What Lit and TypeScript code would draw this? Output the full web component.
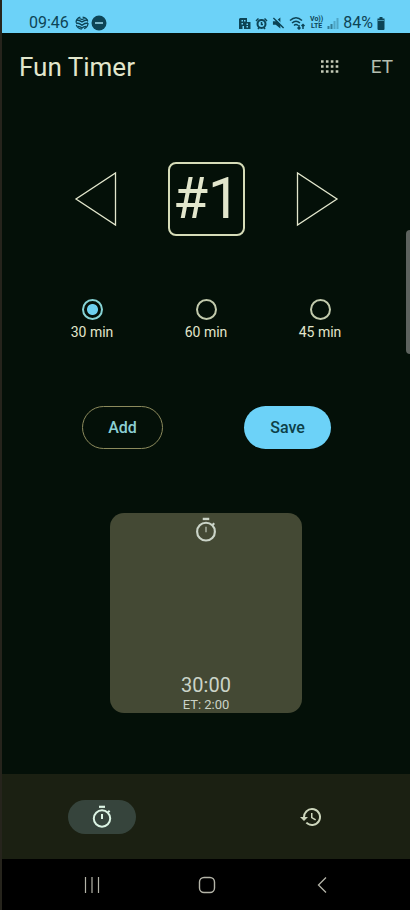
import { LitElement, html, css, svg } from "lit";
import { customElement, state } from "lit/decorators.js";

const stopwatch = (hand: number) => svg`
  <path d="M9 1.8h6" stroke-width="2.2"/>
  <circle cx="12" cy="13.500" r="8.200" stroke-width="2"/>
  <path d="M12 9v5" stroke-width=${hand}/>
  <path d="M18 7.400l1.600-1.600" stroke-width="2"/>`;

@customElement("app-root")
export class AppRoot extends LitElement {
  @state() minutes = 30;
  @state() current = 1;

  static styles = css`
    :host {
      display: flex;
      flex-direction: column;
      box-sizing: border-box;
      min-height: 100vh;
      position: relative;
      border-left: 2px solid #26241c;
      background: #041008;
      color: #e2e6cc;
      font-family: Roboto, sans-serif;
      overflow: hidden;
    }
    * { box-sizing: border-box; }
    svg { display: block; fill: none; stroke: currentColor; }
    button {
      display: block;
      margin: 0;
      padding: 0;
      border: 0;
      background: none;
      color: inherit;
      font: inherit;
    }
    .status {
      display: flex;
      align-items: flex-end;
      height: 33px;
      padding: 0 25px 0 27px;
      background: #6cd2f8;
      color: #0d4456;
      font-size: 16px;
      line-height: 20px;
    }
    .left, .right { display: flex; align-items: center; }
    .left { gap: 2px; flex: 1; }
    .time { margin-right: 4px; }
    .right { gap: 4px; }
    .volte {
      font-size: 7px;
      line-height: 7px;
      font-weight: 700;
      text-align: center;
    }
    .volte span { display: block; }
    .bar {
      display: flex;
      align-items: center;
      height: 68px;
      padding: 0 17px 0 17px;
    }
    h1 { flex: 1; margin: 0; font-size: 26px; line-height: 32px; font-weight: 400; }
    .et { margin-left: 32px; font-size: 19px; line-height: 24px; color: #b4beb0; }
    .grid-btn { color: #c6ccb8; }
    main { flex: 1; display: flex; flex-direction: column; align-items: stretch; padding-top: 61px; }
    .picker { display: grid; grid-template-columns: 1fr 77px 1fr; align-items: center; padding: 0 69px 0 70px; }
    .picker button:last-child { justify-self: end; }
    .number {
      display: flex;
      align-items: center;
      justify-content: center;
      height: 74px;
      border: 2px solid #d6dcb8;
      border-radius: 8px;
      font-size: 57px;
      line-height: 64px;
    }
    .options {
      display: grid;
      grid-template-columns: repeat(3, 1fr);
      margin: 63px 33px 0;
      padding: 0;
      border: 0;
    }
    .options label {
      display: flex;
      flex-direction: column;
      align-items: center;
      gap: 3px;
      font-size: 14px;
      line-height: 18px;
    }
    .options input {
      appearance: none;
      width: 21px;
      height: 21px;
      margin: 0;
      border: 2px solid #c2caac;
      border-radius: 50%;
    }
    .options input:checked {
      border-color: #86d2d4;
      background: radial-gradient(circle, #6ed0ef 0 5px, transparent 6px);
    }
    .actions { display: flex; justify-content: space-between; margin: 65px 79px 0 80px; }
    .actions button {
      width: 81px;
      height: 43px;
      border: 1px solid #8c8a5c;
      border-radius: 22px;
      color: #8cd0d4;
      font-size: 16px;
      font-weight: 500;
    }
    .actions .save { width: 87px; border: 0; background: #6cd2f8; color: #0d4048; }
    .card {
      display: flex;
      flex-direction: column;
      align-items: center;
      align-self: center;
      width: 192px;
      height: 200px;
      margin-top: 64px;
      padding-top: 4px;
      border-radius: 14px;
      background: #444934;
      color: #cbd4c8;
    }
    .left-time { margin-top: auto; font-size: 20px; line-height: 24px; }
    .extra { font-size: 13px; line-height: 16px; }
    nav {
      display: flex;
      align-items: center;
      justify-content: space-between;
      height: 85px;
      padding: 0 65px 0 66px;
      background: #1b2012;
    }
    nav button {
      display: flex;
      align-items: center;
      justify-content: center;
      width: 68px;
      height: 34px;
      border-radius: 17px;
      color: #cdd6bc;
    }
    nav .on { background: #36443c; color: #dcf4e4; }
    .system {
      display: grid;
      grid-template-columns: repeat(3, 1fr);
      align-items: center;
      justify-items: center;
      height: 51px;
      padding: 0 31px 0 33px;
      background: #000;
      color: #b4b4a8;
    }
    .edge {
      position: absolute;
      right: 0;
      top: 230px;
      width: 4px;
      height: 124px;
      border-radius: 4px 0 0 4px;
      background: #5d625e;
    }
  `;

  render() {
    return html`
      <header class="status">
        <div class="left">
          <span class="time">09:46</span>
          <svg width="14" height="14" viewBox="0 0 14 14" stroke-width="1.300"><circle cx="7" cy="7" r="6" stroke-dasharray="7 2.400"/><path d="M1.500 4q3 0 5.500 2 2.500-2 5.500-2M1 7q3.500 0 6 2.300Q9.500 7 13 7M3 10.500q2.500 0 4 1.500 1.500-1.500 4-1.500M4.500 2.500L7 3.500l2.500-1"/></svg>
          <svg width="16" height="16" viewBox="0 0 16 16"><circle cx="8" cy="8" r="7.500" fill="currentColor" stroke="none"/><path d="M4 8h8" stroke="#9fdcf0" stroke-width="1.500"/></svg>
        </div>
        <div class="right">
          <svg width="12" height="12" viewBox="0 0 12 12"><path fill="currentColor" stroke="none" fill-rule="evenodd" d="M1 1h7v4h3.500v7H5V9H3.500v3H0V2zM2.500 3v1.500H4V3zM5 3v1.500h1.500V3zM2.500 6v1.500H4V6zM7.500 6.500v1.500H9V6.500zM7.500 9v1.500H9V9z"/></svg>
          <svg width="13" height="13" viewBox="0 0 13 13"><circle cx="6.500" cy="7" r="4" stroke-width="2"/><path d="M1 4l2.500-2.500M12 4L9.500 1.500M3 12l1.500-2M10 12l-1.500-2M6.500 5v2.500H8" stroke-width="1.500"/></svg>
          <svg width="13" height="14" viewBox="0 0 14 14"><path fill="currentColor" stroke="none" d="M1 5h3l5-4v12L4 9H1z"/><path d="M3 1l11 11" stroke="#6cd2f8" stroke-width="1.500"/><path d="M1.500 1.500l11 11" stroke-width="1.500"/></svg>
          <svg width="17" height="14" viewBox="0 0 17 14" stroke-width="1.500"><path d="M1 4.500q6-5.500 12 0M3 7q4-3.500 8 0M5 9.500q2-2 4 0M10 9v4M8.500 11.500L10 13l1.500-1.500M14 13V8.500M12.500 10L14 8.500 15.500 10"/></svg>
          <span class="volte"><span>Vo))</span><span>LTE</span></span>
          <svg width="12" height="12" viewBox="0 0 12 12" stroke-width="2"><path d="M1.500 12V9M4.500 12V7" opacity=".6"/><path d="M7.500 12V4M10.500 12V1" opacity=".3"/></svg>
          <span>84%</span>
          <svg width="8" height="13" viewBox="0 0 8 13"><path fill="currentColor" stroke="none" d="M2.500 0h3v1.500H7.500V12q0 1-1 1h-5q-1 0-1-1V1.500h2z"/><path d="M1 3.500h6" stroke="#4797b1"/></svg>
        </div>
      </header>
      <div class="bar">
        <h1>Fun Timer</h1>
        <button class="grid-btn" aria-label="Grid">
          <svg width="18" height="14" viewBox="0 0 18 14" stroke-width="2.600" stroke-dasharray="2.600 2.300"><path d="M0 1.500h18M0 6.500h18M0 11.500h18"/></svg>
        </button>
        <button class="et">ET</button>
      </div>
      <main>
        <div class="picker">
          <button aria-label="Previous" @click=${() => (this.current = Math.max(1, this.current - 1))}>
            <svg width="48" height="56" viewBox="0 0 48 56" stroke-width="1.300"><path d="M43.500 2v52L4 28z"/></svg>
          </button>
          <div class="number">#${this.current}</div>
          <button aria-label="Next" @click=${() => (this.current += 1)}>
            <svg width="48" height="56" viewBox="0 0 48 56" stroke-width="1.300"><path d="M4.500 2v52L44 28z"/></svg>
          </button>
        </div>
        <fieldset class="options" aria-label="Duration">
          ${[30, 60, 45].map((m) => html`
            <label>
              <input type="radio" name="minutes" .checked=${this.minutes === m} @change=${() => (this.minutes = m)} />
              ${m} min
            </label>`)}
        </fieldset>
        <div class="actions">
          <button>Add</button>
          <button class="save">Save</button>
        </div>
        <section class="card">
          <svg width="26" height="26" viewBox="0 0 24 24">${stopwatch(1)}</svg>
          <div class="left-time">${this.minutes}:00</div>
          <div class="extra">ET: 2:00</div>
        </section>
      </main>
      <nav>
        <button class="on" aria-label="Timer"><svg width="24" height="24" viewBox="0 0 24 24">${stopwatch(2)}</svg></button>
        <button aria-label="History">
          <svg width="24" height="24" viewBox="0 0 24 24"><path fill="currentColor" stroke="none" d="M13 3a9 9 0 0 0-9 9H1l4 4 4-4H6a7 7 0 1 1 2.060 4.940l-1.420 1.420A9 9 0 1 0 13 3zm-1 5v5l4.250 2.520.770-1.280-3.520-2.090V8z"/></svg>
        </button>
      </nav>
      <footer class="system">
        <button aria-label="Recent apps"><svg width="16" height="16" viewBox="0 0 16 16" stroke-width="1.200"><path d="M1.500 0v16M8 0v16M14.500 0v16"/></svg></button>
        <button aria-label="Home"><svg width="18" height="18" viewBox="0 0 18 18" stroke-width="1.400"><rect x="1.500" y="1.500" width="15" height="15" rx="4.500"/></svg></button>
        <button aria-label="Back"><svg width="10" height="16" viewBox="0 0 10 16" stroke-width="1.300"><path d="M9 .500L1.500 8 9 15.500"/></svg></button>
      </footer>
      <div class="edge"></div>
    `;
  }
}
